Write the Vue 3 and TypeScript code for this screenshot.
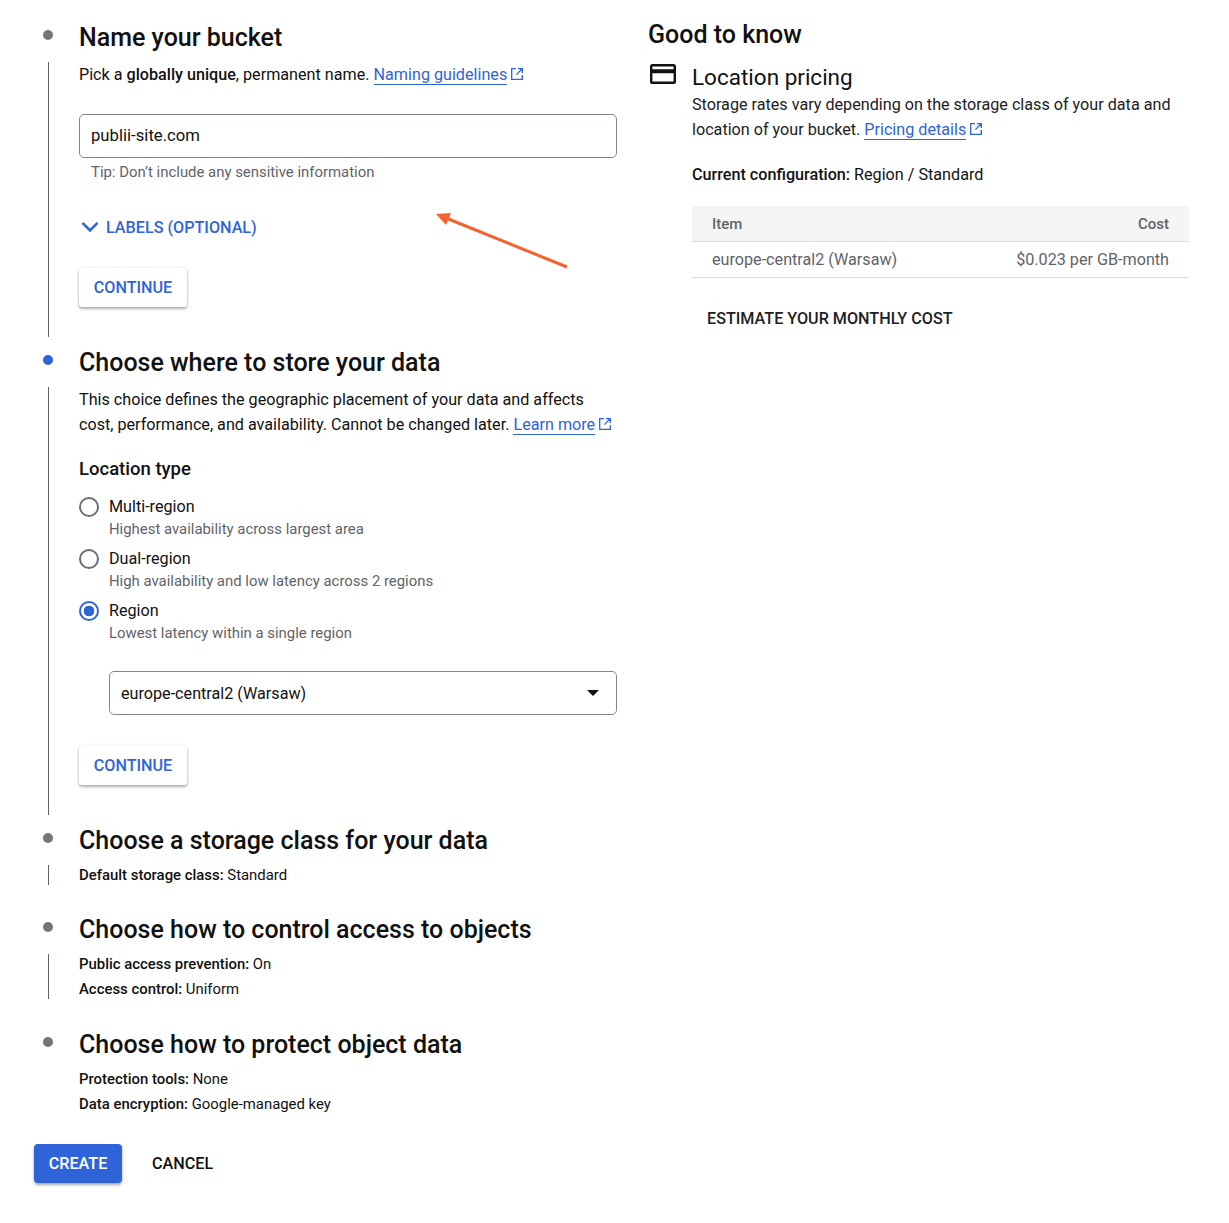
<script setup lang="ts">
const regions = [
  { name: 'Multi-region', hint: 'Highest availability across largest area', on: false },
  { name: 'Dual-region', hint: 'High availability and low latency across 2 regions', on: false },
  { name: 'Region', hint: 'Lowest latency within a single region', on: true },
]
</script>

<template>
  <div class="page">
    <main class="left">
      <section class="step s1">
        <div class="rail"><span class="dot"></span><span class="line"></span></div>
        <div class="body">
          <h2>Name your bucket</h2>
          <p class="desc">Pick a <b>globally unique</b>, permanent name. <a>Naming guidelines</a>
            <svg class="ext" viewBox="0 0 14 14"><path d="M6 1.7H1.7v10.6h10.6V8M8 1.7h4.3V6M12.2 1.8 6.4 7.6" /></svg>
          </p>
          <div class="field name-field">publii-site.com</div>
          <div class="tip">Tip: Don’t include any sensitive information</div>
          <div class="labels">
            <svg viewBox="0 0 18 12" class="chev"><path d="M1.500 1.800 9 9.300 16.500 1.800" /></svg>
            <span>LABELS (OPTIONAL)</span>
          </div>
          <button class="raised">CONTINUE</button>
        </div>
      </section>

      <section class="step s2">
        <div class="rail"><span class="dot blue"></span><span class="line"></span></div>
        <div class="body">
          <h2>Choose where to store your data</h2>
          <p class="desc tall">This choice defines the geographic placement of your data and affects cost, performance, and availability. Cannot be changed later. <a>Learn more</a>
            <svg class="ext" viewBox="0 0 14 14"><path d="M6 1.7H1.7v10.6h10.6V8M8 1.7h4.3V6M12.2 1.8 6.4 7.6" /></svg>
          </p>
          <h3>Location type</h3>
          <div class="radios">
            <div v-for="r in regions" :key="r.name" class="radio">
              <span class="circle" :class="{ on: r.on }"></span>
              <div>
                <div class="rname">{{ r.name }}</div>
                <div class="rhint">{{ r.hint }}</div>
              </div>
            </div>
          </div>
          <div class="field select">
            <span>europe-central2 (Warsaw)</span>
            <span class="caret"></span>
          </div>
          <button class="raised">CONTINUE</button>
        </div>
      </section>

      <section class="step s3">
        <div class="rail"><span class="dot"></span><span class="line"></span></div>
        <div class="body">
          <h2>Choose a storage class for your data</h2>
          <div class="summary"><div><b>Default storage class:</b> Standard</div></div>
        </div>
      </section>

      <section class="step s4">
        <div class="rail"><span class="dot"></span><span class="line"></span></div>
        <div class="body">
          <h2>Choose how to control access to objects</h2>
          <div class="summary">
            <div><b>Public access prevention:</b> On</div>
            <div><b>Access control:</b> Uniform</div>
          </div>
        </div>
      </section>

      <section class="step s5">
        <div class="rail"><span class="dot"></span></div>
        <div class="body">
          <h2>Choose how to protect object data</h2>
          <div class="summary">
            <div><b>Protection tools:</b> None</div>
            <div><b>Data encryption:</b> Google-managed key</div>
          </div>
        </div>
      </section>

      <div class="actions">
        <button class="create">CREATE</button>
        <button class="cancel">CANCEL</button>
      </div>
    </main>

    <aside class="right">
      <h2>Good to know</h2>
      <div class="info">
        <svg class="card" viewBox="0 0 26 20"><path fill-rule="evenodd" d="M2.6 0h20.8A2.6 2.6 0 0 1 26 2.6v14.8a2.6 2.6 0 0 1-2.6 2.6H2.6A2.6 2.6 0 0 1 0 17.400V2.600A2.600 2.600 0 0 1 2.600 0ZM2.400 2.400v2.800h21.200V2.400ZM2.400 9.200v8.400h21.200V9.200Z" /></svg>
        <div class="info-body">
          <h4>Location pricing</h4>
          <p>Storage rates vary depending on the storage class of your data and location of your bucket. <a>Pricing details</a>
            <svg class="ext" viewBox="0 0 14 14"><path d="M6 1.7H1.7v10.6h10.6V8M8 1.7h4.3V6M12.2 1.8 6.4 7.6" /></svg>
          </p>
          <p class="config"><b>Current configuration:</b> Region / Standard</p>
          <div class="table">
            <div class="thead"><span>Item</span><span>Cost</span></div>
            <div class="trow"><span>europe-central2 (Warsaw)</span><span>$0.023 per GB-month</span></div>
          </div>
          <div class="estimate">ESTIMATE YOUR MONTHLY COST</div>
        </div>
      </div>
    </aside>

    <svg class="arrow" viewBox="0 0 140 62" aria-hidden="true">
      <path d="M131 54 10 5" fill="none" stroke="#f4622f" stroke-width="3" />
      <path d="M0 1 15 0 10 12Z" fill="#f4622f" />
    </svg>
  </div>
</template>

<style>
html, body { margin: 0; background: #fff; }
</style>

<style scoped>
.page {
  position: relative;
  display: flex;
  width: 1229px;
  height: 1223px;
  overflow: hidden;
  font-family: Roboto, "Liberation Sans", sans-serif;
  font-size: 16.16px;
  color: #202124;
  background: #fff;
}
.left { width: 583px; margin-left: 34px; padding-top: 22px; flex: none; }
.right { width: 541px; margin-left: 31px; padding-top: 19px; flex: none; }
h2, h3, h4, p { margin: 0; }
b { font-weight: 500; }
a { color: #2f64d8; border-bottom: 1px solid #2f64d8; }

.step { display: flex; }
.rail { width: 45px; flex: none; display: flex; flex-direction: column; align-items: flex-start; }
.dot { width: 10px; height: 10px; margin: 8px 0 22px 9px; border-radius: 50%; background: #757575; flex: none; }
.dot.blue { background: #2f64d8; }
.line { width: 1px; flex: 1; margin-left: 14px; background: #5f6368; }
.body { width: 538px; }
.body h2, .right h2 { padding-top: 1px; font-size: 25px; line-height: 30px; font-weight: 500; color: #111; }

.s1 { height: 315px; margin-bottom: 10px; }
.s2 { height: 468px; margin-bottom: 10px; }
.s3 { height: 60px; margin-bottom: 29px; }
.s4 { height: 85px; margin-bottom: 30px; }
.s5 { height: 115px; }

.desc { margin-top: 10px; line-height: 24px; color: #111; }
.desc.tall { margin-top: 9px; line-height: 25px; }
.ext { display: inline-block; width: 14px; height: 14px; margin-left: 3px; vertical-align: -1px; }
.ext path { fill: none; stroke: #2f64d8; stroke-width: 1.300; }

.field {
  box-sizing: border-box;
  height: 44px;
  border: 1px solid #80868b;
  border-radius: 5px;
  padding: 0 11px;
  display: flex;
  align-items: center;
  color: #111;
}
.name-field { margin-top: 27px; padding-bottom: 2px; font-size: 16.700px; }
.tip { margin: 6px 0 0 12px; font-size: 14.900px; line-height: 17px; color: #5f6368; }
.labels { display: flex; align-items: center; margin-top: 34px; height: 24px; color: #2f64d8; font-weight: 500; }
.chev { width: 18px; height: 12px; margin: 0 7px 0 2px; }
.chev path { fill: none; stroke: #2f64d8; stroke-width: 2.600; }

button { font: inherit; font-weight: 500; border: none; cursor: pointer; }
.raised {
  display: block;
  width: 108px;
  height: 39px;
  margin-top: 29px;
  border-radius: 3px;
  background: #fff;
  color: #2f64d8;
  padding: 0;
  box-shadow: 0 2px 3px rgba(60, 64, 67, .4), 0 0 3px rgba(60, 64, 67, .14);
}

h3 { margin-top: 20px; font-size: 18.500px; line-height: 24px; font-weight: 500; color: #111; }
.radios { margin-top: 14px; display: flex; flex-direction: column; gap: 6px; }
.radio { display: flex; gap: 10px; height: 46px; }
.circle { box-sizing: border-box; width: 20px; height: 20px; margin-top: 2px; border: 2.500px solid #6b6e72; border-radius: 50%; flex: none; }
.circle.on { border-color: #2f64d8; background: radial-gradient(circle, #2f64d8 0 5px, #fff 5.600px); }
.rname { line-height: 23px; color: #111; }
.rhint { font-size: 14.900px; line-height: 23px; color: #5f6368; }
.select { margin: 26px 0 0 30px; justify-content: space-between; padding-right: 17px; }
.caret { width: 0; height: 0; border: 6px solid transparent; border-top-color: #111; border-bottom: 0; }
.select + .raised { margin-top: 31px; }

.summary { margin-top: 7px; font-size: 14.900px; line-height: 25px; color: #111; }

.actions { display: flex; align-items: center; }
.create {
  width: 88px; height: 39px; padding: 0; border-radius: 4px;
  background: #2f64d8; color: #fff;
  box-shadow: 0 2px 3px rgba(60, 64, 67, .45);
}
.cancel { margin-left: 30px; padding: 0; background: none; color: #111; }

.info { display: flex; margin-top: 12px; }
.card { width: 26px; height: 20px; margin: 2px 16px 0 2px; fill: #111; flex: none; }
.info-body { width: 497px; }
h4 { font-size: 22.500px; line-height: 30px; font-weight: 400; color: #111; }
.info-body p { line-height: 25px; color: #202124; }
.info-body .config { margin-top: 20px; color: #111; }
.table { margin-top: 19px; color: #5f6368; }
.thead, .trow { display: flex; justify-content: space-between; padding: 0 20px; align-items: center; }
.thead { height: 35px; background: #f5f5f5; border-bottom: 1px solid #dadce0; font-size: 15px; font-weight: 500; }
.trow { height: 35px; border-bottom: 1px solid #dadce0; }
.estimate { margin: 29px 0 0 15px; line-height: 24px; font-weight: 500; color: #202124; }

.arrow { position: absolute; left: 436px; top: 213px; width: 140px; height: 62px; }
</style>
